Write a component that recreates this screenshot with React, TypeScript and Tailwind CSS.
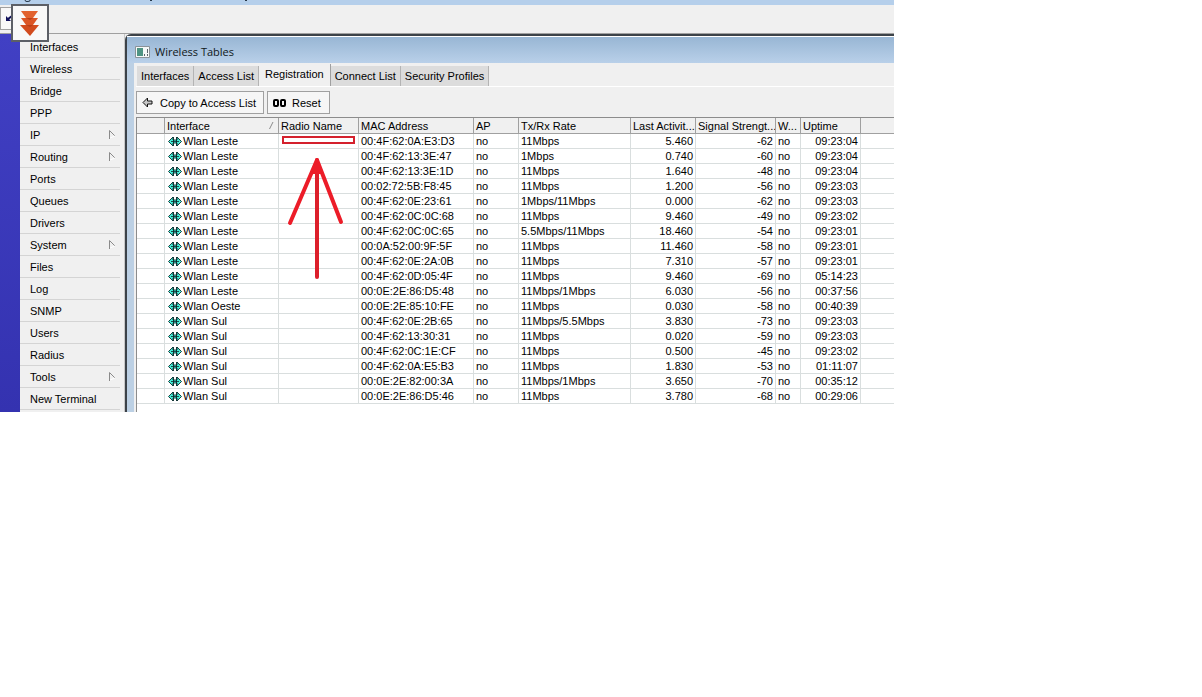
const menuItems = [
  { label: "Interfaces" },
  { label: "Wireless" },
  { label: "Bridge" },
  { label: "PPP" },
  { label: "IP", submenu: true },
  { label: "Routing", submenu: true },
  { label: "Ports" },
  { label: "Queues" },
  { label: "Drivers" },
  { label: "System", submenu: true },
  { label: "Files" },
  { label: "Log" },
  { label: "SNMP" },
  { label: "Users" },
  { label: "Radius" },
  { label: "Tools", submenu: true },
  { label: "New Terminal" },
];

const tabs = ["Interfaces", "Access List", "Registration", "Connect List", "Security Profiles"];

// interface, mac, rate, last activity, signal, uptime
const clients = [
  ["Wlan Leste", "00:4F:62:0A:E3:D3", "11Mbps", "5.460", "-62", "09:23:04"],
  ["Wlan Leste", "00:4F:62:13:3E:47", "1Mbps", "0.740", "-60", "09:23:04"],
  ["Wlan Leste", "00:4F:62:13:3E:1D", "11Mbps", "1.640", "-48", "09:23:04"],
  ["Wlan Leste", "00:02:72:5B:F8:45", "11Mbps", "1.200", "-56", "09:23:03"],
  ["Wlan Leste", "00:4F:62:0E:23:61", "1Mbps/11Mbps", "0.000", "-62", "09:23:03"],
  ["Wlan Leste", "00:4F:62:0C:0C:68", "11Mbps", "9.460", "-49", "09:23:02"],
  ["Wlan Leste", "00:4F:62:0C:0C:65", "5.5Mbps/11Mbps", "18.460", "-54", "09:23:01"],
  ["Wlan Leste", "00:0A:52:00:9F:5F", "11Mbps", "11.460", "-58", "09:23:01"],
  ["Wlan Leste", "00:4F:62:0E:2A:0B", "11Mbps", "7.310", "-57", "09:23:01"],
  ["Wlan Leste", "00:4F:62:0D:05:4F", "11Mbps", "9.460", "-69", "05:14:23"],
  ["Wlan Leste", "00:0E:2E:86:D5:48", "11Mbps/1Mbps", "6.030", "-56", "00:37:56"],
  ["Wlan Oeste", "00:0E:2E:85:10:FE", "11Mbps", "0.030", "-58", "00:40:39"],
  ["Wlan Sul", "00:4F:62:0E:2B:65", "11Mbps/5.5Mbps", "3.830", "-73", "09:23:03"],
  ["Wlan Sul", "00:4F:62:13:30:31", "11Mbps", "0.020", "-59", "09:23:03"],
  ["Wlan Sul", "00:4F:62:0C:1E:CF", "11Mbps", "0.500", "-45", "09:23:02"],
  ["Wlan Sul", "00:4F:62:0A:E5:B3", "11Mbps", "1.830", "-53", "01:11:07"],
  ["Wlan Sul", "00:0E:2E:82:00:3A", "11Mbps/1Mbps", "3.650", "-70", "00:35:12"],
  ["Wlan Sul", "00:0E:2E:86:D5:46", "11Mbps", "3.780", "-68", "00:29:06"],
];

const headCell = "overflow-hidden border-r border-b border-[#a0a0a0] p-0 pl-0.5 text-left font-normal whitespace-nowrap";
const cell = "border-r border-b border-[#d9dede] p-0 pl-0.5 truncate";
const numberCell = "border-r border-b border-[#d9dede] p-0 pr-0.5 text-right";

function WlanIcon() {
  return (
    <svg width="14" height="11" viewBox="0 0 14 11" className="shrink-0">
      <path d="M.5 5.500 5 1v3h4V1l4.500 4.500L9 10V7H5v3z" fill="#45ecd6" stroke="#082c2c" strokeWidth=".9" />
      <path d="M5.500 1v9M8.500 1v9" stroke="#0a2a2a" strokeWidth=".9" />
      <path d="M3 5.500h8" stroke="#0a2a2a" strokeWidth=".8" />
    </svg>
  );
}

function SubmenuIcon() {
  return (
    <svg width="7" height="9" viewBox="0 0 7 9" fill="none">
      <path d="M6 6 .5.5V9" stroke="#8a8a8a" />
      <path d="M6 6 1 8" stroke="#fff" />
    </svg>
  );
}

function TitleStrip() {
  return (
    <div className="h-[5px] bg-[#b5cfeb]">
      <svg width="300" height="5" viewBox="0 0 300 5" fill="none">
        <path d="M25 0q0 2 3 1.500t2-1.500" stroke="#27384a" />
        <path d="M150 .5h2M245 .5h2" stroke="#27384a" />
      </svg>
    </div>
  );
}

function Toolbar() {
  return (
    <div className="relative h-[29px] border-b border-[#a0a0a0] pt-0.5">
      <button type="button" aria-label="Undo" className="flex h-[23px] w-6 items-center border border-[#a0a0a0] bg-[#f8f8f8] pl-1">
        <svg width="10" height="10" viewBox="0 0 10 10" fill="none">
          <path d="M1 2v5h5z" fill="#10105a" />
          <path d="M3 5 7 2" stroke="#10105a" strokeWidth="2" />
        </svg>
      </button>
      <div className="absolute -top-px left-[11px] z-10 flex h-[38px] w-[38px] items-center justify-center border-2 border-[#5c5f66] bg-[#f8f8f8]">
        <svg width="20" height="26" viewBox="0 0 20 26">
          <path d="M1 1h17l-5 7H6z" fill="#e2622f" />
          <path d="M1 8h17l-5 7H6z" fill="#db5526" />
          <path d="M0 15h19l-9 11z" fill="#d24b1e" />
          <path d="M6 8h7l-3 2zM6 15h7l-3 2z" fill="#b83f18" />
        </svg>
      </div>
    </div>
  );
}

function Sidebar() {
  return (
    <div className="flex w-[125px] shrink-0">
      <div className="w-5 shrink-0 bg-linear-to-b from-[#4140c4] to-[#3432b0]" />
      <nav className="flex-1 border-r border-[#c8c8c8] pt-0.5">
        {menuItems.map((item) => (
          <a
            key={item.label}
            href="#"
            className="mr-1 flex h-[22px] items-center justify-between border-b border-[#d4d4d4] pr-1 pl-[10px]"
          >
            {item.label}
            {item.submenu && <SubmenuIcon />}
          </a>
        ))}
      </nav>
    </div>
  );
}

function RegistrationTable() {
  return (
    <div className="relative mt-[3px] border-t border-l border-[#8c8c8c] bg-white pb-2">
      <table className="w-full table-fixed border-separate border-spacing-0">
        <colgroup>
          <col className="w-7" />
          <col className="w-[114px]" />
          <col className="w-20" />
          <col className="w-[115px]" />
          <col className="w-[45px]" />
          <col className="w-28" />
          <col className="w-[65px]" />
          <col className="w-20" />
          <col className="w-[25px]" />
          <col className="w-[60px]" />
          <col />
        </colgroup>
        <thead>
          <tr className="h-4 bg-[#f0f0f0]">
            <th className={headCell} />
            <th className={headCell}>
              <div className="flex items-center justify-between pr-1">
                Interface
                <svg width="5" height="7" viewBox="0 0 5 7">
                  <path d="M.5 7 4 0" stroke="#8a8a8a" />
                </svg>
              </div>
            </th>
            <th className={headCell}>Radio Name</th>
            <th className={headCell}>MAC Address</th>
            <th className={headCell}>AP</th>
            <th className={headCell}>Tx/Rx Rate</th>
            <th className={headCell}>Last Activit...</th>
            <th className={headCell}>Signal Strengt...</th>
            <th className={headCell}>W...</th>
            <th className={headCell}>Uptime</th>
            <th className="border-b border-[#a0a0a0] p-0" />
          </tr>
        </thead>
        <tbody>
          {clients.map(([name, mac, rate, activity, signal, uptime]) => (
            <tr key={mac} className="h-[15px]">
              <td className={cell} />
              <td className={cell}>
                <div className="flex items-center gap-px pl-px">
                  <WlanIcon />
                  {name}
                </div>
              </td>
              <td className={cell} />
              <td className={cell}>{mac}</td>
              <td className={cell}>no</td>
              <td className={cell}>{rate}</td>
              <td className={numberCell}>{activity}</td>
              <td className={numberCell}>{signal}</td>
              <td className={cell}>no</td>
              <td className={numberCell}>{uptime}</td>
              <td className="border-b border-[#d9dede] p-0" />
            </tr>
          ))}
        </tbody>
      </table>

      {/* red annotation over the radio name column */}
      <svg className="pointer-events-none absolute top-4 left-[142px]" width="80" height="150" viewBox="0 0 80 150" fill="none">
        <rect x="4" y="3" width="71" height="6" stroke="#d4202c" strokeWidth="2" />
        <path d="M38 26v117" stroke="#dc1f2b" strokeWidth="4" strokeLinecap="round" />
        <path d="M11 89 38 26l24 62" stroke="#ec1c28" strokeWidth="4" strokeLinecap="round" strokeLinejoin="round" />
        <path d="M38 25 33 40h10z" fill="#ec1c28" />
      </svg>
    </div>
  );
}

function WirelessWindow() {
  return (
    <section className="flex min-w-0 flex-1 flex-col rounded-tl-md border-t-2 border-l-2 border-[#3c4248] bg-[#bcd0e4]">
      <header className="flex h-[27px] items-center gap-[5px] border-t border-white bg-linear-to-b from-[#98b6d4] to-[#b9d0e9] pt-1 pl-2 font-['Open_Sans',sans-serif] text-[#101820]">
        <svg width="15" height="12" viewBox="0 0 15 12">
          <path d="M.5.5h14v11H.5z" fill="#f6f8f8" stroke="#8a9298" />
          <path d="M2 2h6v8H2z" fill="#4f9484" />
          <path d="M9 8h1v2H9zM12 3h1v4h-1zM12 8h1v2h-1z" fill="#5a646c" />
        </svg>
        <h1>Wireless Tables</h1>
      </header>
      <div className="ml-[7px] flex-1 bg-[#f0f0f0] pl-0.5">
        <div role="tablist" className="flex h-6 items-end border-b border-white pl-px">
          {tabs.map((tab) =>
            tab === "Registration" ? (
              <button key={tab} type="button" role="tab" aria-selected="true" className="h-[22px] border-r border-[#a0a0a0] px-1.5 pb-[3px]">
                {tab}
              </button>
            ) : (
              <button key={tab} type="button" role="tab" aria-selected="false" className="h-5 border-r border-[#b4b4b4] bg-[#dcdcdc] px-1">
                {tab}
              </button>
            ),
          )}
        </div>
        <div className="flex gap-[3px] pt-1">
          <button type="button" className="flex h-[23px] items-center gap-[7px] border border-[#a0a0a0] bg-[#f6f6f6] pr-[7px] pl-[5px]">
            <svg width="11" height="11" viewBox="0 0 11 11" fill="none">
              <path d="M1 5.500 5.500 1v3h4.500v3h-4.500v3z" fill="#c8c8c8" stroke="#111" />
            </svg>
            Copy to Access List
          </button>
          <button type="button" className="flex h-[23px] items-center gap-[5px] border border-[#a0a0a0] bg-[#f6f6f6] pr-2 pl-[5px]">
            <svg width="14" height="8" viewBox="0 0 14 8" fill="none">
              <rect x="1" y="1" width="4" height="6" rx="1" stroke="#000" strokeWidth="2" />
              <rect x="8" y="1" width="4" height="6" rx="1" stroke="#000" strokeWidth="2" />
            </svg>
            Reset
          </button>
        </div>
        <RegistrationTable />
      </div>
    </section>
  );
}

export default function App() {
  return (
    <div className="min-h-screen bg-white">
      <main className="w-full max-w-[894px] overflow-hidden bg-[#f0f0f0] font-['Liberation_Sans',sans-serif] text-[11px] leading-[14px] text-black">
        <TitleStrip />
        <Toolbar />
        <div className="flex">
          <Sidebar />
          <WirelessWindow />
        </div>
      </main>
    </div>
  );
}
